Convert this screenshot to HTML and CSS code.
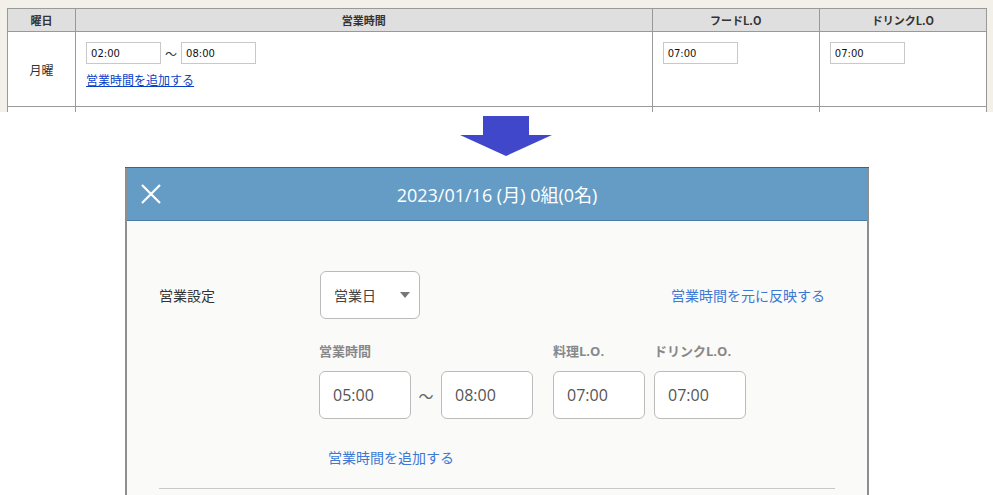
FILE: index.html
```html
<!DOCTYPE html>
<html lang="ja">
<head>
    <meta charset="UTF-8">
    <title>営業時間設定 比較</title>
    <link rel="stylesheet" href="styles.css">
</head>
<body>
    <div class="old-shot">
        <table class="hours-table">
            <thead>
                <tr>
                    <th class="col-day">曜日</th>
                    <th class="col-hours">営業時間</th>
                    <th class="col-lo">フードL.O</th>
                    <th class="col-lo">ドリンクL.O</th>
                </tr>
            </thead>
            <tbody>
                <tr class="day-row">
                    <td class="day-name">月曜</td>
                    <td>
                        <div class="range">
                            <input class="old-input" type="text" value="02:00">
                            <span class="tilde">〜</span>
                            <input class="old-input" type="text" value="08:00">
                        </div>
                        <a class="old-link" href="#">営業時間を追加する</a>
                    </td>
                    <td><input class="old-input" type="text" value="07:00"></td>
                    <td><input class="old-input" type="text" value="07:00"></td>
                </tr>
                <tr class="next-row">
                    <td></td><td></td><td></td><td></td>
                </tr>
            </tbody>
        </table>
    </div>

    <div class="arrow-area">
        <svg class="arrow" width="92" height="40" viewBox="0 0 92 40">
            <polygon points="23,0 69,0 69,19 92,19 46,40 0,19 23,19" fill="#4047cb"/>
        </svg>
    </div>

    <div class="modal-shot">
        <div class="modal">
            <div class="modal-header">
                <svg class="close" width="22" height="22" viewBox="0 0 22 22">
                    <path d="M2 2 L20 20 M20 2 L2 20" stroke="#fff" stroke-width="2.2" fill="none"/>
                </svg>
                <span class="modal-title">2023/01/16 (月) 0組(0名)</span>
            </div>
            <div class="modal-body">
                <div class="setting-row">
                    <div class="setting-label">営業設定</div>
                    <div class="select-box">
                        <span>営業日</span>
                        <span class="caret"></span>
                    </div>
                    <a class="link reset-link" href="#">営業時間を元に反映する</a>
                </div>

                <div class="time-area">
                    <div class="time-group hours-group">
                        <div class="field-label">営業時間</div>
                        <div class="range">
                            <div class="time-input">05:00</div>
                            <span class="wave">〜</span>
                            <div class="time-input">08:00</div>
                        </div>
                    </div>
                    <div class="time-group">
                        <div class="field-label">料理L.O.</div>
                        <div class="time-input">07:00</div>
                    </div>
                    <div class="time-group">
                        <div class="field-label">ドリンクL.O.</div>
                        <div class="time-input">07:00</div>
                    </div>
                </div>

                <a class="link add-link" href="#">営業時間を追加する</a>
                <div class="divider"></div>
            </div>
        </div>
    </div>
</body>
</html>
```

FILE: styles.css
```css
* {
    margin: 0;
    padding: 0;
    box-sizing: border-box;
}

body {
    width: 993px;
    height: 495px;
    overflow: hidden;
    background-color: #fff;
    font-family: "Open Sans", "Noto Sans CJK JP", sans-serif;
    color: #333;
}

/* old screen (top) */
.old-shot {
    height: 112px;
    overflow: hidden;
    background-color: #f3f0e9;
    padding: 8px 6px 0 7px;
    font-family: "Noto Sans CJK JP", sans-serif;
    font-size: 11px;
}

.hours-table {
    width: 980px;
    border-collapse: collapse;
    background-color: #fff;
}

.hours-table th, .hours-table td {
    border: 1px solid #999;
    vertical-align: top;
}

.hours-table th {
    height: 23px;
    background-color: #dfdfdf;
    font-weight: bold;
    color: #333;
    text-align: center;
    vertical-align: middle;
    line-height: 20px;
}

.col-day { width: 68px; }
.col-hours { width: 576px; }
.col-lo { width: 167px; }

.day-row td {
    height: 75px;
    padding: 10px 10px 0 10px;
}

.day-row td.day-name {
    text-align: center;
    vertical-align: middle;
    padding: 0;
    font-size: 12px;
}

.next-row td {
    height: 20px;
}

.range {
    display: flex;
    align-items: center;
}

.old-input {
    width: 75px;
    height: 22px;
    border: 1px solid #c8c8c8;
    padding: 0 4px;
    font-family: "DejaVu Sans", sans-serif;
    font-size: 10px;
    color: #111;
}

.tilde {
    width: 20px;
    text-align: center;
    font-size: 12px;
}

.old-link {
    display: inline-block;
    margin-top: 7px;
    color: #0a3fc7;
    font-size: 12px;
}

/* arrow */
.arrow-area {
    height: 55px;
    padding: 4px 0 0 460px;
}

.arrow {
    display: block;
}

/* new screen (bottom) */
.modal-shot {
    width: 744px;
    height: 328px;
    margin-left: 125px;
    overflow: hidden;
    background-color: #8e8e8e;
    padding: 0 2px 0 2px;
    border-top: 1px solid #3c6584;
}

.modal {
    height: 100%;
    background-color: #fafaf8;
}

.modal-header {
    height: 53px;
    display: flex;
    align-items: center;
    justify-content: center;
    position: relative;
    background-color: #659cc5;
    border-bottom: 1px solid #4b7ea6;
    color: #fff;
}

.close {
    position: absolute;
    left: 13px;
    top: 15px;
}

.modal-title {
    font-size: 18px;
}

.modal-body {
    padding: 50px 32px 0 32px;
}

.setting-row {
    display: flex;
    align-items: center;
}

.setting-label {
    width: 161px;
    font-size: 14px;
    color: #333;
}

.select-box {
    width: 100px;
    height: 48px;
    border: 1px solid #bbb;
    border-radius: 6px;
    background-color: #fff;
    display: flex;
    align-items: center;
    justify-content: space-between;
    padding: 0 9px 0 13px;
    font-size: 14px;
    color: #444;
}

.caret {
    width: 0;
    height: 0;
    border-left: 5px solid transparent;
    border-right: 5px solid transparent;
    border-top: 6px solid #777;
}

.link {
    color: #3c78d4;
    text-decoration: none;
    font-size: 14px;
}

.reset-link {
    margin-left: auto;
    margin-right: 10px;
}

.time-area {
    display: flex;
    gap: 9px;
    padding-left: 160px;
    margin-top: 22px;
}

.hours-group {
    margin-right: 11px;
}

.field-label {
    font-size: 13px;
    font-weight: bold;
    color: #888;
    height: 21px;
    margin-bottom: 9px;
}

.time-input {
    width: 92px;
    height: 48px;
    border: 1px solid #bbb;
    border-radius: 6px;
    background-color: #fff;
    display: flex;
    align-items: center;
    padding-left: 13px;
    font-size: 16px;
    color: #555;
}

.wave {
    width: 30px;
    text-align: center;
    font-size: 15px;
    color: #666;
}

.add-link {
    display: block;
    margin: 28px 0 0 169px;
}

.divider {
    margin-top: 21px;
    border-top: 1px solid #c8c8c8;
}
```
